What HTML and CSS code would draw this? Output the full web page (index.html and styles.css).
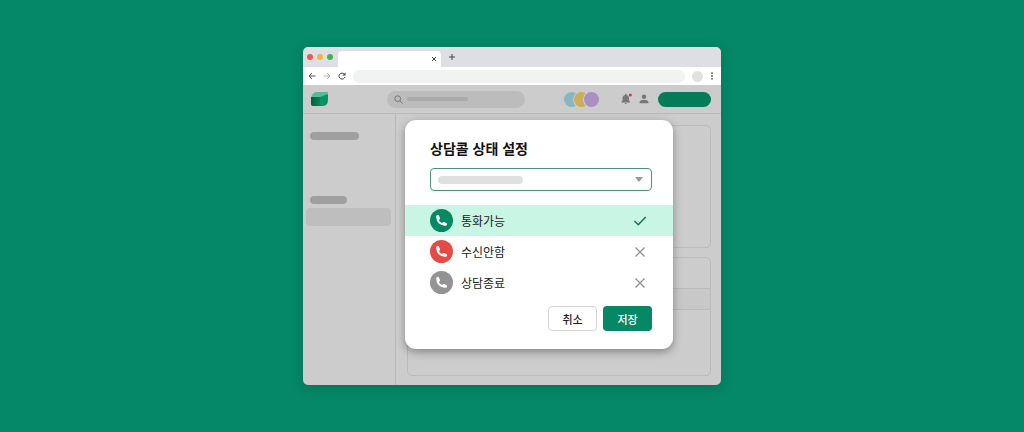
FILE: index.html
```html
<!DOCTYPE html>
<html lang="ko">
<head>
  <meta charset="UTF-8">
  <meta name="viewport" content="width=device-width, initial-scale=1.0">
  <title>상담콜 상태 설정</title>
  <link rel="stylesheet" href="styles.css">
</head>
<body>
  <div class="browser">
    <div class="tab-bar">
      <div class="lights">
        <span class="light red"></span>
        <span class="light yellow"></span>
        <span class="light green"></span>
      </div>
      <div class="tab">
        <button class="icon-button" aria-label="탭 닫기">
          <svg width="6" height="6" viewBox="0 0 6 6"><path d="M1 1l4 4M5 1L1 5" stroke="#444" stroke-width="1"/></svg>
        </button>
      </div>
      <button class="icon-button" aria-label="새 탭">
        <svg width="8" height="8" viewBox="0 0 8 8"><path d="M4 1v6M1 4h6" stroke="#444" stroke-width="1"/></svg>
      </button>
    </div>

    <div class="toolbar">
      <button class="icon-button" aria-label="뒤로">
        <svg width="8" height="8" viewBox="0 0 8 8" fill="none" stroke="#555"><path d="M7.5 4H1.2M4 1L1 4l3 3"/></svg>
      </button>
      <button class="icon-button" aria-label="앞으로">
        <svg width="8" height="8" viewBox="0 0 8 8" fill="none" stroke="#b5b5b5"><path d="M.5 4h6.3M4 1l3 3-3 3"/></svg>
      </button>
      <button class="icon-button" aria-label="새로고침">
        <svg width="8" height="8" viewBox="0 0 8 8"><path d="M6.4 2.2A3 3 0 1 0 7 4.8" fill="none" stroke="#444"/><path d="M7.5.4v3.200H4.300z" fill="#444"/></svg>
      </button>
      <input class="address" type="text" aria-label="주소">
      <span class="profile"></span>
      <button class="icon-button" aria-label="메뉴">
        <svg width="4" height="8" viewBox="0 0 4 8" fill="#555"><circle cx="2" cy="1.200" r=".9"/><circle cx="2" cy="4" r=".9"/><circle cx="2" cy="6.800" r=".9"/></svg>
      </button>
    </div>

    <div class="app">
      <header class="app-header">
        <svg class="logo" width="17" height="14" viewBox="0 0 17 14">
          <defs>
            <linearGradient id="fold" x1="0" x2="1"><stop offset="0" stop-color="#00603a"/><stop offset="1" stop-color="#008657"/></linearGradient>
          </defs>
          <path d="M0 5Q2 0 6 0h11l-1 5z" fill="#5bb893"/>
          <path d="M0 5h9v9H2q-2 0-2-2z" fill="url(#fold)"/>
          <path d="M9 5l8-3v6q0 6-6 6H9z" fill="#059563"/>
        </svg>
        <label class="search">
          <svg width="9" height="9" viewBox="0 0 9 9" fill="none" stroke="#777"><circle cx="3.700" cy="3.700" r="2.900"/><path d="M5.800 5.800L8.500 8.500"/></svg>
          <span class="bar search-bar"></span>
          <input type="search" aria-label="검색">
        </label>
        <div class="avatars">
          <span class="avatar blue"></span>
          <span class="avatar gold"></span>
          <span class="avatar purple"></span>
        </div>
        <button class="icon-button bell" aria-label="알림">
          <svg width="12" height="12" viewBox="0 0 12 12"><path d="M5 1.500a.8.8 0 0 1 1.600 0v.4C8.300 2.300 9 3.600 9 5.100v2.700l1 1V9.500H1.500V8.800l1-1V5.100c0-1.500.8-2.800 2.500-3.200zM4.700 10h2.100a1.050 1 0 0 1-2.100 0z" fill="#777"/><circle cx="10.300" cy="2" r="1.600" fill="#d43d3d"/></svg>
        </button>
        <button class="icon-button person" aria-label="내 계정">
          <svg width="10" height="10" viewBox="0 0 10 10" fill="#777"><circle cx="5" cy="2.700" r="2.200"/><path d="M.6 9.300V8C.6 6.500 3.300 5.800 5 5.800s4.400.7 4.400 2.200v1.300z"/></svg>
        </button>
        <button class="action" aria-label="상담 시작"></button>
      </header>

      <div class="app-body">
        <nav class="sidebar">
          <span class="bar menu-title"></span>
          <span class="bar menu-title short"></span>
          <span class="menu-item"></span>
        </nav>
        <main class="content">
          <section class="panel first"></section>
          <section class="panel second">
            <div class="panel-head"></div>
            <div class="panel-row"></div>
            <div class="panel-space"></div>
          </section>
        </main>
      </div>
    </div>

    <form class="modal">
      <h1>상담콜 상태 설정</h1>
      <div class="select-box">
        <select aria-label="상담 번호"><option></option></select>
        <span class="bar select-bar"></span>
        <svg class="caret" width="8" height="5" viewBox="0 0 8 5"><path d="M0 0h8L4 5z" fill="#999"/></svg>
      </div>

      <div class="options">
        <label class="option">
          <input type="radio" name="status" checked>
          <span class="call available">
            <svg width="15" height="15" viewBox="0 0 15 15">
              <g id="phone" fill="none" stroke="#fff" stroke-linecap="round">
                <path d="M3.400 4C3.400 8.600 6.400 11.600 11 11.600" stroke-width="2.200"/>
                <path d="M3.700 3.300l.9 2.100M9.600 10.400l2.100.9" stroke-width="2.800"/>
              </g>
            </svg>
          </span>
          <span>통화가능</span>
          <svg class="mark" width="14" height="10" viewBox="0 0 14 10"><path d="M1.500 5l3.800 3.700L12.700 1" fill="none" stroke="#08764f" stroke-width="1.500"/></svg>
        </label>
        <label class="option">
          <input type="radio" name="status">
          <span class="call refused"><svg width="15" height="15" viewBox="0 0 15 15"><use href="#phone"/></svg></span>
          <span>수신안함</span>
          <svg class="mark" width="14" height="10" viewBox="0 0 14 10"><path d="M2.500.5l9 9M11.500.5l-9 9" stroke="#909090" stroke-width="1.300"/></svg>
        </label>
        <label class="option">
          <input type="radio" name="status">
          <span class="call closed"><svg width="15" height="15" viewBox="0 0 15 15"><use href="#phone"/></svg></span>
          <span>상담종료</span>
          <svg class="mark" width="14" height="10" viewBox="0 0 14 10"><path d="M2.500.5l9 9M11.500.5l-9 9" stroke="#909090" stroke-width="1.300"/></svg>
        </label>
      </div>

      <div class="buttons">
        <button type="button" class="cancel">취소</button>
        <button type="button" class="save">저장</button>
      </div>
    </form>
  </div>
</body>
</html>
```

FILE: styles.css
```css
* {
  box-sizing: border-box;
}

body {
  margin: 0;
  min-height: 100vh;
  display: flex;
  justify-content: center;
  align-items: center;
  background: #058868;
  color: #222;
  font-family: "Noto Sans CJK KR", sans-serif;
}

svg {
  display: block;
  flex-shrink: 0;
}

button, input, select {
  font-family: inherit;
  border: none;
  margin: 0;
  padding: 0;
  background: none;
}

button {
  cursor: pointer;
}

.icon-button {
  display: block;
  flex-shrink: 0;
}

.bar {
  display: block;
  border-radius: 4px;
}

/* Browser window */
.browser {
  position: relative;
  width: 100%;
  max-width: 418px;
  border-radius: 5px;
  box-shadow: 0 2px 12px rgba(0, 50, 35, 0.25);
}

.tab-bar {
  display: flex;
  align-items: center;
  height: 20px;
  padding: 0 4px;
  background: #dddfe4;
  border-radius: 5px 5px 0 0;
}

.lights {
  display: flex;
  gap: 4px;
  width: 31px;
}

.light {
  width: 6px;
  height: 6px;
  border-radius: 50%;
}

.red {
  background: #ea5b50;
}

.yellow {
  background: #f1b446;
}

.green {
  background: #3fb54b;
}

.tab {
  align-self: flex-end;
  display: flex;
  align-items: center;
  justify-content: flex-end;
  width: 103px;
  height: 16px;
  margin-right: 7px;
  padding-right: 4px;
  background: #fff;
  border-radius: 4px 4px 0 0;
}

.toolbar {
  display: flex;
  align-items: center;
  gap: 7px;
  height: 18px;
  padding: 0 7px 0 5px;
  background: #fff;
}

.address {
  flex: 1;
  min-width: 0;
  height: 13px;
  padding: 0 8px;
  font-size: 10px;
  background: #f1f3f3;
  border-radius: 7px;
}

.profile {
  width: 11px;
  height: 11px;
  border-radius: 50%;
  background: #e2e2e2;
}

/* App behind the dialog */
.app {
  background: #cccccc;
  border-radius: 0 0 5px 5px;
}

.app-header {
  display: flex;
  align-items: center;
  height: 29px;
  padding: 0 10px 0 8px;
  border-bottom: 1px solid #b9b9b9;
}

.search {
  position: relative;
  display: flex;
  align-items: center;
  gap: 4px;
  width: 138px;
  height: 17px;
  margin-left: 59px;
  padding-left: 7px;
  background: #bcbcbc;
  border-radius: 9px;
}

.search input {
  position: absolute;
  inset: 0;
  width: 100%;
}

.search-bar {
  width: 61px;
  height: 4px;
  background: #aaa;
}

.avatars {
  display: flex;
  margin-left: auto;
}

.avatar {
  width: 15px;
  height: 15px;
  border-radius: 50%;
  box-shadow: 0 0 0 1px #cccccc;
}

.avatar + .avatar {
  margin-left: -5px;
}

.blue {
  background: #88b6c3;
}

.gold {
  background: #cfae59;
}

.purple {
  background: #a88fc4;
}

.bell {
  margin-left: 21px;
}

.person {
  margin: 0 9px 0 7px;
}

.action {
  width: 53px;
  height: 15px;
  border-radius: 8px;
  background: #047c59;
}

.app-body {
  display: flex;
}

.sidebar {
  width: 93px;
  padding: 18px 4px 0 3px;
  border-right: 1px solid #b9b9b9;
}

.menu-title {
  width: 49px;
  height: 8px;
  margin: 0 4px 56px;
  background: #a0a0a0;
}

.short {
  width: 37px;
  margin-bottom: 4px;
}

.menu-item {
  display: block;
  height: 18px;
  border-radius: 4px;
  background: #bebebe;
}

.content {
  flex: 1;
  display: flex;
  flex-direction: column;
  gap: 9px;
  padding: 11px 10px 9px 11px;
}

.panel {
  border: 1px solid #bbbbbb;
  border-radius: 5px;
}

.first {
  height: 123px;
}

.panel-head {
  height: 30px;
}

.panel-row {
  height: 22px;
  background: #c8c8c8;
  border-top: 1px solid #bbbbbb;
  border-bottom: 1px solid #bbbbbb;
}

.panel-space {
  height: 65px;
}

/* Status dialog */
.modal {
  position: absolute;
  top: 73px;
  left: 102px;
  width: 268px;
  padding: 16px 0 18px;
  background: #fff;
  border-radius: 11px;
  box-shadow: 0 3px 9px rgba(0, 0, 0, 0.35);
}

.modal h1 {
  margin: 0 25px 8px;
  color: #111;
  font-size: 14px;
  line-height: 24px;
  font-weight: 700;
}

.select-box {
  position: relative;
  height: 23px;
  margin: 0 21px 14px 25px;
}

.select-box select {
  display: block;
  width: 100%;
  height: 100%;
  appearance: none;
  border: 1px solid #4d927c;
  border-radius: 4px;
}

.select-bar {
  position: absolute;
  top: 8px;
  left: 8px;
  width: 85px;
  height: 8px;
  background: #e0e0e0;
  pointer-events: none;
}

.caret {
  position: absolute;
  top: 9px;
  right: 9px;
  pointer-events: none;
}

.option {
  display: flex;
  align-items: center;
  gap: 8px;
  height: 31px;
  padding: 0 26px 0 25px;
  font-size: 12px;
  line-height: 18px;
  cursor: pointer;
}

.option:has(input:checked) {
  background: #c9f6e4;
}

.option input {
  position: absolute;
  opacity: 0;
}

.call {
  display: flex;
  align-items: center;
  justify-content: center;
  width: 23px;
  height: 23px;
  border-radius: 50%;
}

.available {
  background: #058863;
}

.refused {
  background: #e54b44;
}

.closed {
  background: #939393;
}

.mark {
  margin-left: auto;
}

.buttons {
  display: flex;
  justify-content: flex-end;
  gap: 6px;
  margin: 8px 21px 0;
}

.buttons button {
  width: 49px;
  height: 25px;
  border-radius: 4px;
  font-size: 11px;
  line-height: 16px;
  font-weight: 500;
}

.buttons .cancel {
  border: 1px solid #d5d5d5;
  color: #222;
}

.buttons .save {
  background: #058863;
  color: #fff;
}
```
